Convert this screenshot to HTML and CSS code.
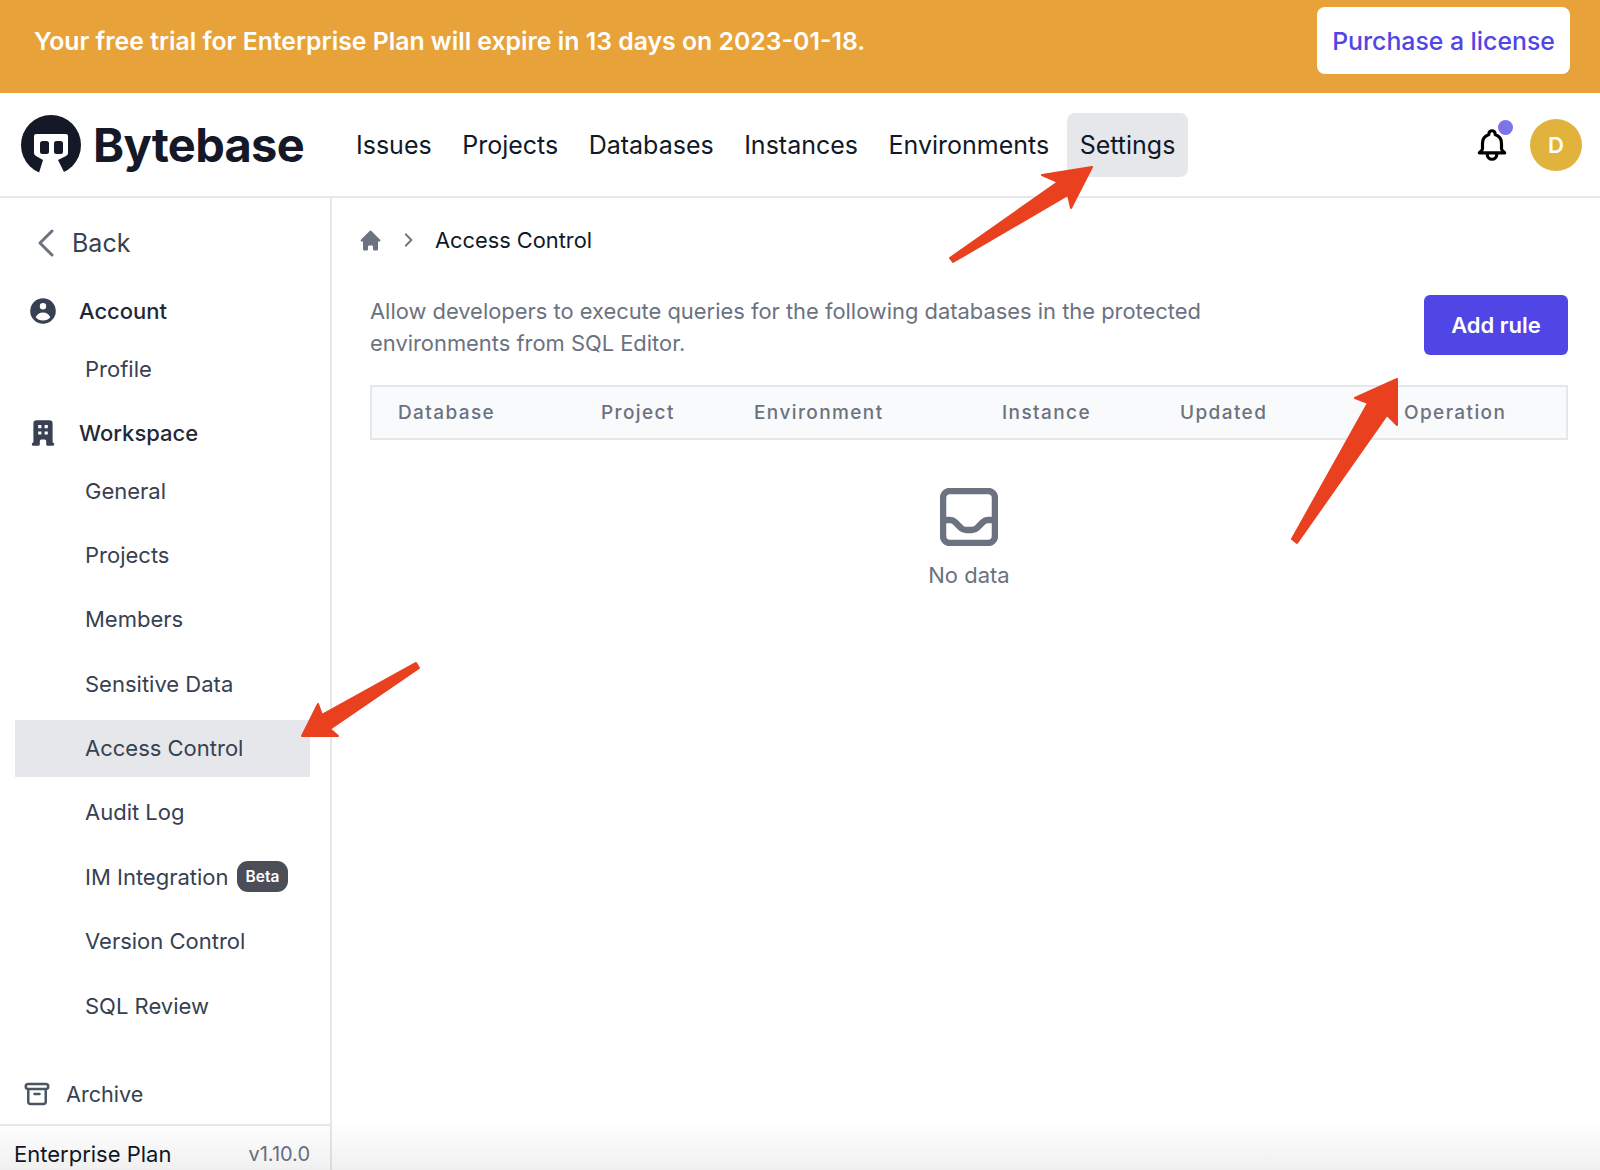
FILE: index.html
```html
<!DOCTYPE html>
<html lang="en">

<head>
  <meta charset="UTF-8">
  <title>Bytebase - Access Control</title>
  <link rel="stylesheet" href="styles.css">
</head>

<body>

  <div class="banner">
    <span class="banner-text">Your free trial for Enterprise Plan will expire in 13 days on 2023-01-18.</span>
    <a class="banner-btn">Purchase a license</a>
  </div>

  <header class="topbar">
    <div class="logo">
      <svg class="logo-mark" viewBox="0 0 60 60">
        <circle cx="30" cy="30" r="30" fill="#141827" />
        <path d="M15 19H45Q47 19 47 21V38Q47 40 45 41L37 45L45 61H17L22 45L15 41Q13 40 13 38V21Q13 19 15 19Z" fill="#fff" />
        <rect x="19" y="26" width="9" height="13" rx="2.5" fill="#141827" />
        <rect x="33" y="26" width="9" height="13" rx="2.5" fill="#141827" />
      </svg>
      <span class="logo-text">Bytebase</span>
    </div>
    <nav class="mainnav">
      <a class="mainnav-item">Issues</a>
      <a class="mainnav-item">Projects</a>
      <a class="mainnav-item">Databases</a>
      <a class="mainnav-item">Instances</a>
      <a class="mainnav-item">Environments</a>
      <a class="mainnav-item active">Settings</a>
    </nav>
    <div class="topbar-right">
      <div class="bell">
        <svg viewBox="0 0 24 24" fill="none" stroke="#000" stroke-width="2" stroke-linecap="round" stroke-linejoin="round">
          <path d="M15 17h5l-1.4-1.4A2 2 0 0 1 18 14.2V11a6 6 0 0 0-4-5.7V5a2 2 0 1 0-4 0v.3A6 6 0 0 0 6 11v3.2a2 2 0 0 1-.6 1.4L4 17h5m6 0v1a3 3 0 1 1-6 0v-1m6 0H9" />
        </svg>
        <span class="bell-dot"></span>
      </div>
      <div class="avatar">D</div>
    </div>
  </header>

  <div class="main">
    <aside class="sidebar">
      <div class="sidebar-scroll">
        <a class="back">
          <svg viewBox="0 0 24 32" fill="none" stroke="#6b7280" stroke-width="3" stroke-linecap="round" stroke-linejoin="round">
            <path d="M18 4L6 16l12 12" />
          </svg>
          Back
        </a>

        <div class="group group-account">
          <svg class="group-icon" viewBox="0 0 20 20" fill="#374151">
            <path fill-rule="evenodd" d="M18 10a8 8 0 1 1-16 0 8 8 0 0 1 16 0zm-6-3a2 2 0 1 1-4 0 2 2 0 0 1 4 0zm-2 4a5 5 0 0 0-4.55 2.93A6 6 0 0 0 10 16a6 6 0 0 0 4.55-2.07A5 5 0 0 0 10 11z" clip-rule="evenodd" />
          </svg>
          Account
        </div>
        <a class="subitem subitem-first">Profile</a>

        <div class="group group-workspace">
          <svg class="group-icon" viewBox="0 0 20 20" fill="#374151">
            <path fill-rule="evenodd" d="M4 4a2 2 0 0 1 2-2h8a2 2 0 0 1 2 2v12a1 1 0 1 1 0 2h-3a1 1 0 0 1-1-1v-2a1 1 0 0 0-1-1H9a1 1 0 0 0-1 1v2a1 1 0 0 1-1 1H4a1 1 0 1 1 0-2V4zm3 1h2v2H7V5zm2 4H7v2h2V9zm2-4h2v2h-2V5zm2 4h-2v2h2V9z" clip-rule="evenodd" />
          </svg>
          Workspace
        </div>
        <div class="sublist">
          <a class="subitem">General</a>
          <a class="subitem">Projects</a>
          <a class="subitem">Members</a>
          <a class="subitem">Sensitive Data</a>
          <a class="subitem active">Access Control</a>
          <a class="subitem">Audit Log</a>
          <a class="subitem">IM Integration <span class="beta">Beta</span></a>
          <a class="subitem">Version Control</a>
          <a class="subitem">SQL Review</a>
        </div>
      </div>

      <a class="archive">
        <svg viewBox="0 0 24 24" fill="none" stroke="#4b5563" stroke-width="2" stroke-linecap="round" stroke-linejoin="round">
          <path d="M5 8h14M5 8a2 2 0 1 1 0-4h14a2 2 0 1 1 0 4M5 8v10a2 2 0 0 0 2 2h10a2 2 0 0 0 2-2V8m-9 4h4" />
        </svg>
        Archive
      </a>
      <div class="plan">
        <span class="plan-name">Enterprise Plan</span>
        <span class="plan-version">v1.10.0</span>
      </div>
    </aside>

    <main class="content">
      <div class="crumbs">
        <svg class="crumb-home" viewBox="0 0 20 20" fill="#6b7280">
          <path d="M10.7 2.3a1 1 0 0 0-1.4 0l-7 7a1 1 0 0 0 1.4 1.4l.3-.3V17a1 1 0 0 0 1 1h2a1 1 0 0 0 1-1v-2a1 1 0 0 1 1-1h2a1 1 0 0 1 1 1v2a1 1 0 0 0 1 1h2a1 1 0 0 0 1-1v-6.600l.3.3a1 1 0 0 0 1.400-1.400l-7-7z" />
        </svg>
        <svg class="crumb-sep" viewBox="0 0 10 16" fill="none" stroke="#6b7280" stroke-width="1.800" stroke-linecap="round" stroke-linejoin="round">
          <path d="M3 3l5 5-5 5" />
        </svg>
        <span class="crumb-text">Access Control</span>
      </div>

      <div class="intro">
        <p class="intro-text">Allow developers to execute queries for the following databases in the protected environments from SQL Editor.</p>
        <button class="add-btn">Add rule</button>
      </div>

      <div class="table-head">
        <span>Database</span>
        <span>Project</span>
        <span>Environment</span>
        <span>Instance</span>
        <span>Updated</span>
        <span>Operation</span>
      </div>

      <div class="empty">
        <svg viewBox="0 0 58 58" fill="none" stroke="#6b7280" stroke-width="6.500" stroke-linejoin="round" stroke-linecap="round">
          <rect x="3" y="3" width="52" height="52" rx="7" />
          <path d="M3 32h7q3 0 5 2l6 6q2 2 5 2h6q3 0 5-2l6-6q2-2 5-2h7" />
        </svg>
        <span>No data</span>
      </div>
    </main>
  </div>

  <!-- red annotation arrows on top of the screenshot -->
  <svg class="arrows" viewBox="0 0 1600 1170">
    <g fill="#e9411f" stroke="#e9411f" stroke-width="2" stroke-linejoin="round">
      <path d="M1092 167L1042 175L1058 182L950 258L953 262L1068 195L1071 208Z" />
      <path d="M1397 379L1355 398L1368 403L1292 539L1297 543L1387 415L1397 425Z" />
      <path d="M302 736L318 704L322 715L416 663L419 668L330 729L338 736Z" />
    </g>
  </svg>

  <div class="bottom-fade"></div>

</body>

</html>
```

FILE: styles.css
```css
* {
  box-sizing: border-box;
}

body {
  margin: 0;
  height: 1170px;
  overflow: hidden;
  position: relative;
  font-family: Inter, "Noto Sans", sans-serif;
  background: #fff;
  color: #111827;
}

.banner {
  height: 93px;
  background: #e7a23a;
  display: flex;
  align-items: flex-start;
  justify-content: space-between;
  padding: 7px 30px 0 34px;
}

.banner-text {
  color: #fff;
  font-size: 24.800px;
  font-weight: 600;
  line-height: 69px;
}

.banner-btn {
  width: 253px;
  height: 67px;
  background: #fff;
  border-radius: 8px;
  color: #4f46e5;
  font-size: 24.800px;
  font-weight: 500;
  line-height: 69px;
  text-align: center;
}

.topbar {
  height: 105px;
  border-bottom: 2px solid #e5e7eb;
  display: flex;
  align-items: center;
  padding: 0 18px 0 21px;
}

.logo {
  width: 322px;
  display: flex;
  align-items: center;
  gap: 12px;
}

.logo-mark {
  width: 60px;
  height: 60px;
}

.logo-text {
  font-size: 47px;
  font-weight: 700;
  color: #141827;
  letter-spacing: -0.700px;
}

.mainnav {
  display: flex;
  gap: 4.500px;
}

.mainnav-item {
  padding: 0 13px;
  height: 64px;
  line-height: 64px;
  font-size: 25px;
  border-radius: 8px;
  color: #111827;
}

.mainnav-item.active {
  background: #e5e7eb;
}

.topbar-right {
  margin-left: auto;
  display: flex;
  align-items: center;
  gap: 19px;
}

.bell {
  position: relative;
  width: 38px;
  height: 38px;
}

.bell svg {
  width: 38px;
  height: 38px;
  display: block;
}

.bell-dot {
  position: absolute;
  top: -6px;
  right: -2px;
  width: 15px;
  height: 15px;
  border-radius: 50%;
  background: #7c74e8;
}

.avatar {
  width: 52px;
  height: 52px;
  border-radius: 50%;
  background: #e1b23c;
  color: #fff;
  font-size: 22px;
  font-weight: 600;
  line-height: 52px;
  text-align: center;
}

.main {
  display: flex;
  height: 972px;
}

.sidebar {
  width: 332px;
  border-right: 2px solid #e5e7eb;
  display: flex;
  flex-direction: column;
}

.sidebar-scroll {
  flex: 1;
  padding: 0 20px 0 15px;
}

.back {
  height: 40px;
  margin-top: 25px;
  display: flex;
  align-items: center;
  gap: 14px;
  padding-left: 19px;
  font-size: 25px;
  color: #374151;
}

.back svg {
  width: 24px;
  height: 32px;
}

.group {
  display: flex;
  align-items: center;
  gap: 20px;
  padding-left: 12px;
  height: 40px;
  font-size: 22px;
  font-weight: 500;
  color: #1f2937;
}

.group-account {
  margin-top: 28px;
}

.group-workspace {
  margin-top: 16px;
}

.group-icon {
  width: 32px;
  height: 32px;
}

.subitem {
  display: flex;
  align-items: center;
  gap: 8px;
  height: 57px;
  padding-left: 70px;
  font-size: 22px;
  color: #374151;
}

.subitem-first {
  margin-top: 9px;
}

.sublist {
  display: flex;
  flex-direction: column;
  gap: 7.400px;
  margin-top: 9px;
}

.subitem.active {
  background: #e5e7eb;
}

.beta {
  background: #4b4d57;
  color: #fff;
  font-size: 15.500px;
  font-weight: 600;
  height: 31px;
  line-height: 31px;
  padding: 0 9px;
  border-radius: 11px;
}

.archive {
  display: flex;
  align-items: center;
  gap: 14px;
  height: 40px;
  padding-left: 22px;
  margin-bottom: 10px;
  font-size: 21.600px;
  color: #374151;
}

.archive svg {
  width: 30px;
  height: 30px;
}

.plan {
  height: 46px;
  border-top: 2px solid #e5e7eb;
  display: flex;
  align-items: center;
  justify-content: space-between;
  padding: 11px 20px 0 14px;
}

.plan-name {
  font-size: 22px;
  color: #111827;
}

.plan-version {
  font-size: 20px;
  color: #6b7280;
}

.content {
  flex: 1;
  padding: 0 32px 0 38px;
}

.crumbs {
  display: flex;
  align-items: center;
  height: 40px;
  margin-top: 22px;
  margin-left: -12.500px;
}

.crumb-home {
  width: 25px;
  height: 25px;
}

.crumb-sep {
  width: 12px;
  height: 18px;
  margin-left: 19.500px;
}

.crumb-text {
  margin-left: 21px;
  font-size: 21.800px;
  color: #111827;
}

.intro {
  display: flex;
  align-items: flex-start;
  justify-content: space-between;
  margin-top: 35px;
}

.intro-text {
  margin: 0;
  width: 860px;
  font-size: 21.900px;
  line-height: 32px;
  color: #6b7280;
}

.add-btn {
  width: 144px;
  height: 60px;
  padding-bottom: 2px;
  border: none;
  border-radius: 6px;
  background: #4f46e5;
  color: #fff;
  font-family: inherit;
  font-size: 22px;
  font-weight: 600;
}

.table-head {
  margin-top: 26px;
  height: 55px;
  background: #f9fafb;
  border: 2px solid #e5e7eb;
  display: grid;
  grid-template-columns: 203px 153px 248px 178px 224px 1fr;
  align-items: center;
  padding-left: 26px;
  font-size: 19px;
  font-weight: 500;
  letter-spacing: 1.400px;
  color: #6b7280;
}

.empty {
  margin-top: 48px;
  display: flex;
  flex-direction: column;
  align-items: center;
  gap: 16px;
  font-size: 22px;
  color: #6b7280;
}

.empty svg {
  width: 58px;
  height: 58px;
}

.arrows {
  position: absolute;
  left: 0;
  top: 0;
  width: 1600px;
  height: 1170px;
  pointer-events: none;
}

.bottom-fade {
  position: absolute;
  left: 0;
  right: 0;
  bottom: 0;
  height: 50px;
  background: linear-gradient(rgba(0, 0, 0, 0), rgba(0, 0, 0, 0.06));
  pointer-events: none;
}
```
